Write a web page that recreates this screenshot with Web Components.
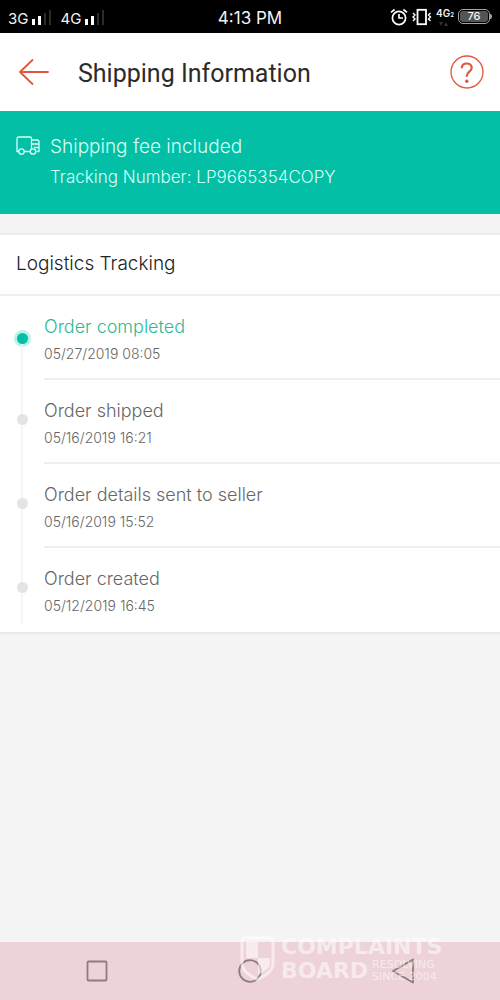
<!DOCTYPE html>
<html lang="en">
<head>
<meta charset="utf-8">
<meta name="viewport" content="width=device-width, initial-scale=1">
<title>Shipping Information</title>
<style>
  body { margin: 0; font-family: Inter, "Liberation Sans", sans-serif; background: #f4f4f4; }
</style>
</head>
<body>
<shipping-page></shipping-page>

<script>
const define = (name, html) => {
  const template = document.createElement('template');
  template.innerHTML = html;
  customElements.define(name, class extends HTMLElement {
    constructor() {
      super();
      this.attachShadow({ mode: 'open' }).append(template.content.cloneNode(true));
    }
  });
};

define('signal-bars', `
  <style>
    :host { display: flex; align-items: flex-end; gap: 4px; }
    svg { display: block; }
  </style>
  <slot></slot>
  <svg width="20" height="18" viewBox="0 0 20 18" aria-hidden="true">
    <path fill="#fff" d="M0 9h3v6H0zM6 6h3v9H6z"/>
    <path fill="#2b2b2b" d="M12 3h2v12h-2zM17 0h2v15h-2z"/>
  </svg>`);

define('battery-level', `
  <style>
    :host { display: flex; align-items: center; }
    .cell { box-sizing: border-box; width: 32px; height: 15px; border: 1px solid #a5a5a5; border-radius: 5px; padding: 1px; display: flex; }
    .fill { flex: 1; background: #555; border-radius: 3px; font-size: 11px; line-height: 11px; text-align: center; font-weight: 500; }
    .tip { width: 2px; height: 5px; background: #a5a5a5; border-radius: 0 2px 2px 0; }
  </style>
  <div class="cell"><div class="fill"><slot></slot></div></div><div class="tip"></div>`);

define('status-bar', `
  <style>
    :host { display: grid; grid-template-columns: 1fr auto 1fr; align-items: center; height: 33px; padding: 0 8px; background: #000; color: #f4f4f4; font-size: 15px; line-height: 18px; }
    .left { display: flex; gap: 8px; padding-top: 4px; }
    .time { font-size: 17px; line-height: 24px; padding-top: 2px; }
    .right { display: flex; justify-content: flex-end; align-items: center; gap: 4px; }
    .net { display: flex; flex-direction: column; font-size: 10px; line-height: 12px; font-weight: 600; }
    .net small { font-size: 6px; }
    svg { display: block; }
  </style>
  <div class="left"><signal-bars>3G</signal-bars><signal-bars>4G</signal-bars></div>
  <div class="time">4:13 PM</div>
  <div class="right">
    <svg width="18" height="18" viewBox="0 0 18 18" fill="none" stroke="#fff" stroke-width="1.7" aria-hidden="true">
      <circle cx="9" cy="10" r="6.6"/><path d="M9 6v4h4M1 4.300L4.600 1.500M17 4.300l-3.600-2.800"/>
    </svg>
    <svg width="20" height="18" viewBox="0 0 20 18" fill="none" stroke="#fff" aria-hidden="true">
      <rect x="5.500" y="1.800" width="8.500" height="14.400" stroke-width="1.800"/>
      <path stroke-width="1.400" d="M1 5l2 2-2 2 2 2-2 2M18.500 5l-2 2 2 2-2 2 2 2"/>
    </svg>
    <div class="net"><div>4G<small>2</small></div>
      <svg width="14" height="6" viewBox="0 0 14 6" fill="#333" aria-hidden="true"><path d="M3 1h4L5 5zM8 5h4l-2-4z"/></svg></div>
    <battery-level>76</battery-level>
  </div>`);

define('app-header', `
  <style>
    :host { display: flex; align-items: center; height: 78px; padding: 0 16px; background: #fff; }
    button { border: 0; padding: 0; background: none; color: #e2553a; display: block; }
    svg { display: block; }
    h1 { flex: 1; margin: 0 0 0 28px; padding-top: 3px; font: 400 25px/32px Roboto, "Liberation Sans", sans-serif; color: #2b2b2b; }
  </style>
  <button type="button" aria-label="Back">
    <svg width="34" height="28" viewBox="0 0 34 28" fill="none" stroke="currentColor" stroke-width="1.8" stroke-linecap="round" stroke-linejoin="round"><path d="M32 14H4M16.500 2L4 14l12.500 12"/></svg>
  </button>
  <h1><slot></slot></h1>
  <button type="button" aria-label="Help">
    <svg width="34" height="34" viewBox="0 0 34 34" fill="none" stroke="currentColor"><circle cx="17" cy="17" r="16" stroke-width="1.300"/><path stroke-width="2.200" d="M11.800 13.200c0-3 2.100-4.700 4.900-4.700 2.900 0 5 1.700 5 4.300 0 4-4.900 3.800-4.900 8.400v.6"/><circle cx="16.800" cy="26.200" r="1.700" fill="currentColor" stroke="none"/></svg>
  </button>`);

define('fee-banner', `
  <style>
    :host { display: flex; align-items: flex-start; gap: 10px; padding: 22px 16px 21px; background: #03bfa6; color: #d5fff7; font-weight: 300; }
    svg { display: block; margin-top: 3px; }
    .title { font-size: 19px; line-height: 28px; }
    .number { font-size: 17px; line-height: 32px; }
    button { font: inherit; color: inherit; background: none; border: 0; padding: 0; }
  </style>
  <svg width="24" height="20" viewBox="0 0 24 20" fill="none" stroke="currentColor" stroke-width="1.300" stroke-linejoin="round" aria-hidden="true">
    <path d="M3.200 15.500H1V2.500Q1 1 2.500 1h11.700Q15.500 1 15.500 2.500v13H8M15.500 4h5.700q1.800 0 1.800 2v9.500h-2.500M15.500 8H23M18 11.500h5"/>
    <circle cx="5.500" cy="15.500" r="2.700"/><circle cx="17" cy="15.500" r="2.700" fill="#03bfa6"/>
  </svg>
  <div>
    <div class="title">Shipping fee included</div>
    <div class="number">Tracking Number: LP9665354<button type="button">COPY</button></div>
  </div>`);

define('tracking-step', `
  <style>
    :host { display: grid; grid-template-columns: 44px 1fr; min-height: 84px; }
    .rail { display: flex; flex-direction: column; align-items: center; }
    .before { width: 2px; height: 34px; background: #f5f5f5; }
    .after { width: 2px; flex: 1; background: #f5f5f5; }
    .dot { width: 11px; height: 11px; border-radius: 50%; background: #e4e4e4; }
    .body { box-sizing: border-box; padding-top: 18px; border-bottom: 2px solid #eee; color: #666; font-weight: 300; }
    .name { font-size: 18px; line-height: 26px; }
    time { display: block; font-size: 14px; line-height: 28px; }
    :host([current]) .name { color: #2db896; }
    :host([current]) .before { background: none; height: 37px; }
    :host([current]) .dot { background: #03bfa6; box-shadow: 0 0 0 3px #b9f3e8; }
    :host([last]) .body { border-bottom-color: transparent; }
    :host([last]) .rail { padding-bottom: 8px; }
  </style>
  <div class="rail"><div class="before"></div><div class="dot"></div><div class="after"></div></div>
  <div class="body">
    <div class="name"><slot></slot></div>
    <time><slot name="time"></slot></time>
  </div>`);

define('tracking-card', `
  <style>
    :host { display: block; margin-top: 19px; background: #fff; border-top: 2px solid #ebebeb; border-bottom: 2px solid #e9e9e9; }
    h2 { margin: 0; padding: 14px 16px 15px; border-bottom: 2px solid #eee; font-size: 19px; line-height: 30px; font-weight: 300; color: #222; }
  </style>
  <h2>Logistics Tracking</h2>
  <slot></slot>`);

define('site-watermark', `
  <style>
    :host { display: flex; gap: 6px; color: rgba(255,255,255,.55); pointer-events: none; font-family: "DejaVu Sans", sans-serif; }
    svg { display: block; margin-top: 1px; }
    .big { font-size: 22px; line-height: 24px; font-weight: 700; }
    .row { display: flex; align-items: center; gap: 4px; }
    .small { font-size: 11px; line-height: 12px; }
  </style>
  <svg width="35" height="46" viewBox="0 0 35 46" fill="none" aria-hidden="true">
    <path stroke="currentColor" stroke-width="3" d="M6 2h23q4 0 4 4v22q0 8-15.500 15.500Q2 36 2 28V6q0-4 4-4z"/>
    <path fill="currentColor" d="M6 6h12v16H6zM18 22h12v6q0 5-12 11z"/>
  </svg>
  <div>
    <div class="big">COMPLAINTS</div>
    <div class="row"><div class="big">BOARD</div><div class="small">RESOLVING<br>SINCE 2004</div></div>
  </div>`);

define('nav-bar', `
  <style>
    :host { position: relative; display: grid; grid-template-columns: repeat(3, 1fr); justify-items: center; align-items: center; height: 58px; padding: 0 20px; background: #edd3d7; }
    button { border: 0; padding: 0; background: none; color: #8d7c80; display: block; }
    svg { display: block; }
    site-watermark { position: absolute; left: 48%; bottom: 17px; }
  </style>
  <button type="button" aria-label="Recent apps"><svg width="22" height="22" viewBox="0 0 22 22" fill="none" stroke="currentColor" stroke-width="1.800"><rect x="1.500" y="1.500" width="19" height="19" rx="1"/></svg></button>
  <button type="button" aria-label="Home"><svg width="24" height="24" viewBox="0 0 24 24" fill="none" stroke="currentColor" stroke-width="1.800"><circle cx="12" cy="12" r="10.800"/></svg></button>
  <button type="button" aria-label="Back"><svg width="22" height="26" viewBox="0 0 22 26" fill="none" stroke="currentColor" stroke-width="1.800" stroke-linejoin="round"><path d="M21 1.500v23L1 13z"/></svg></button>
  <site-watermark></site-watermark>`);

define('shipping-page', `
  <style>
    :host { display: flex; flex-direction: column; min-height: 100vh; }
    main { flex: 1; }
  </style>
  <status-bar></status-bar>
  <app-header>Shipping Information</app-header>
  <main>
    <fee-banner></fee-banner>
    <tracking-card>
      <tracking-step current>Order completed<span slot="time">05/27/2019 08:05</span></tracking-step>
      <tracking-step>Order shipped<span slot="time">05/16/2019 16:21</span></tracking-step>
      <tracking-step>Order details sent to seller<span slot="time">05/16/2019 15:52</span></tracking-step>
      <tracking-step last>Order created<span slot="time">05/12/2019 16:45</span></tracking-step>
    </tracking-card>
  </main>
  <nav-bar></nav-bar>`);
</script>
</body>
</html>
